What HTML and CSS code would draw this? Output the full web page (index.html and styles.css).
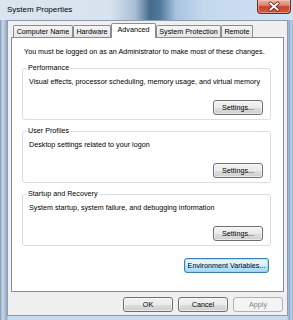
FILE: index.html
```html
<!DOCTYPE html>
<html lang="en">
<head>
<meta charset="utf-8">
<title>System Properties</title>
<link rel="stylesheet" href="styles.css">
</head>
<body>
<div class="window">
  <div class="titlebar">
    <span class="title">System Properties</span>
    <div class="close" aria-label="Close">
      <svg width="34" height="13" viewBox="0 0 34 13">
        <path d="M13 3 L21 10 M21 3 L13 10" stroke="#5a1a10" stroke-width="3.6" stroke-linecap="round" fill="none"/>
        <path d="M13 3 L21 10 M21 3 L13 10" stroke="#ffffff" stroke-width="2" stroke-linecap="round" fill="none"/>
      </svg>
    </div>
  </div>
  <div class="client">
    <div class="tabs">
      <div class="tab tab-cn">Computer Name</div>
      <div class="tab tab-hw">Hardware</div>
      <div class="tab tab-adv active">Advanced</div>
      <div class="tab tab-sp">System Protection</div>
      <div class="tab tab-rm">Remote</div>
    </div>
    <div class="panel">
      <p class="note">You must be logged on as an Administrator to make most of these changes.</p>
      <fieldset class="group">
        <legend>Performance</legend>
        <p class="desc">Visual effects, processor scheduling, memory usage, and virtual memory</p>
        <div class="row"><button class="btn">Settings...</button></div>
      </fieldset>
      <fieldset class="group">
        <legend>User Profiles</legend>
        <p class="desc">Desktop settings related to your logon</p>
        <div class="row"><button class="btn">Settings...</button></div>
      </fieldset>
      <fieldset class="group">
        <legend>Startup and Recovery</legend>
        <p class="desc">System startup, system failure, and debugging information</p>
        <div class="row"><button class="btn">Settings...</button></div>
      </fieldset>
      <div class="env-row"><button class="btn btn-default btn-env">Environment Variables...</button></div>
    </div>
    <div class="actions">
      <button class="btn">OK</button>
      <button class="btn">Cancel</button>
      <button class="btn" disabled>Apply</button>
    </div>
  </div>
</div>
</body>
</html>
```
FILE: styles.css
```css
* { box-sizing: border-box; }

html, body {
  margin: 0;
  padding: 0;
}

body {
  width: 293px;
  height: 320px;
  overflow: hidden;
  font-family: "Liberation Sans", Arial, sans-serif;
  font-size: 7.2px;
  color: #000;
  background: #bcd0e6;
}

.window {
  width: 293px;
  height: 320px;
  display: flex;
  flex-direction: column;
  background: linear-gradient(to right,
    #7d8690 0px, #a9bcd2 1px, #c5d7eb 3px, #a7bdd6 5px, #95a9c0 7px,
    #c8daee 8px, #c8daee 286px,
    #b9cfe8 288px, #7f9fc7 289px, #c0d5ec 291px, #9ab2cf 293px);
}

.titlebar {
  height: 20px;
  display: flex;
  align-items: flex-start;
  background: linear-gradient(to right,
    #dbe5ef 0px, #d8e3ef 110px, #a9bfd5 135px, #456b8c 150px,
    #52799b 160px, #a8c3e0 176px, #c5d9ee 205px, #cfe1f3 293px);
}

.title {
  padding: 5px 0 0 7px;
  font-size: 8px;
  line-height: 10px;
  color: #000;
}

.close {
  margin-left: auto;
  margin-right: 2px;
  width: 34px;
  height: 14px;
  border: 1px solid #6b2b20;
  border-top: none;
  border-radius: 0 0 4px 4px;
  background: linear-gradient(#eab2a4 0%, #dc8570 40%, #c8442c 52%, #d2593c 100%);
  box-shadow: inset 0 0 0 1px rgba(255, 210, 200, 0.45);
  display: flex;
}

.client {
  margin: 0 5px 0 7px;
  height: 296px;
  background: #f0f0f0;
  border: 1px solid #8e9bab;
  display: flex;
  flex-direction: column;
}

.tabs {
  display: flex;
  align-items: flex-end;
  height: 15px;
  margin: 2px 0 0 5px;
}

.tab {
  height: 13px;
  border: 1px solid #898c95;
  border-bottom: none;
  border-radius: 2px 2px 0 0;
  background: linear-gradient(#f5f5f5, #e4e4e4);
  display: flex;
  justify-content: center;
  align-items: center;
  padding-bottom: 1px;
  line-height: 10px;
  white-space: nowrap;
}

.tab.active {
  height: 15px;
  background: #fff;
  position: relative;
  z-index: 1;
  padding-bottom: 2px;
}

.tab-cn { width: 60px; }
.tab-hw { width: 38px; }
.tab-adv { width: 45px; }
.tab-sp { width: 65px; }
.tab-rm { width: 32px; }

.panel {
  width: 273px;
  height: 255px;
  margin: -1px 0 0 3px;
  padding-top: 9px;
  background: #fff;
  border: 1px solid #898c95;
  display: flex;
  flex-direction: column;
}

.note {
  margin: 0 0 0 12px;
  line-height: 10px;
  white-space: nowrap;
}

.group {
  margin: 6px 12px 0 10px;
  padding: 0 7px 4px 6px;
  border: 1px solid #d5dfe5;
  border-radius: 3px;
  min-width: 0;
}

.group legend {
  padding: 0 1px;
  margin-left: -2px;
  line-height: 10px;
}

.desc {
  margin: 4px 0 0;
  line-height: 10px;
  white-space: nowrap;
}

.row {
  display: flex;
  justify-content: flex-end;
  margin-top: 13px;
}

.btn {
  font: inherit;
  color: #000;
  width: 50px;
  height: 15px;
  padding: 0;
  border: 1px solid #707070;
  border-radius: 3px;
  background: linear-gradient(#f2f2f2 0%, #ebebeb 50%, #dddddd 51%, #cfcfcf 100%);
  box-shadow: inset 0 0 0 1px rgba(252, 252, 252, 0.6);
  line-height: 12px;
  white-space: nowrap;
}

.btn-default {
  border-color: #3c7fb1;
  background: linear-gradient(#eaf6fd 0%, #d9f0fc 50%, #bee6fd 51%, #a7d9f5 100%);
  box-shadow: inset 0 0 0 1px rgba(120, 220, 250, 0.55);
}

.btn:disabled {
  border-color: #adb2b5;
  background: #f4f4f4;
  color: #838383;
  box-shadow: none;
}

.env-row {
  display: flex;
  justify-content: flex-end;
  margin: 12px 14px 0 0;
}

.btn-env { width: 85px; }

.actions {
  display: flex;
  justify-content: flex-end;
  gap: 5px;
  margin: 5px 4px 0 0;
}
```
